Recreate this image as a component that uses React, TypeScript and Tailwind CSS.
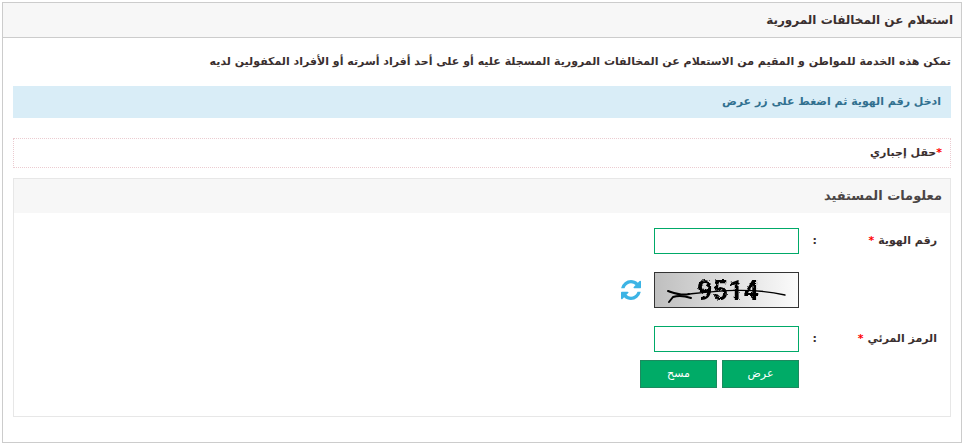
import type { ReactNode } from "react";

const fontStack = "font-['DejaVu_Sans','Noto_Sans',sans-serif]";

const inputClasses =
  "block h-[26px] w-[145px] border border-[#00a968] bg-white px-2 text-xs text-[#333] outline-none";

const buttonClasses =
  "h-7 min-w-[77px] border border-[#1d8a5f] bg-[#00ab67] text-[11px] text-white cursor-pointer hover:bg-[#009459]";

interface FieldRowProps {
  label?: string;
  htmlFor?: string;
  children: ReactNode;
}

function FieldRow({ label, htmlFor, children }: FieldRowProps) {
  return (
    <div className="grid grid-cols-[120px_18px_1fr] items-center text-[11px] font-bold text-[#3a2f2f]">
      {label ? (
        <label htmlFor={htmlFor}>
          {label} <span className="text-[#f00]">*</span>
        </label>
      ) : (
        <span />
      )}
      <span>{label ? ":" : ""}</span>
      <div className="flex items-center gap-[13px]">{children}</div>
    </div>
  );
}

function Captcha() {
  return (
    <svg
      viewBox="0 0 143 34"
      className="h-9 w-[145px] border border-[#333]"
      role="img"
      aria-label="captcha"
    >
      <defs>
        <linearGradient id="captchaBg">
          <stop offset="0" stopColor="#bfbfbf" />
          <stop offset="1" stopColor="#fbfbfb" />
        </linearGradient>
        <filter id="captchaRough" x="-10%" y="-10%" width="120%" height="120%">
          <feTurbulence type="fractalNoise" baseFrequency="0.5" numOctaves="2" seed="4" />
          <feDisplacementMap in="SourceGraphic" scale="3" xChannelSelector="R" yChannelSelector="G" />
          <feGaussianBlur stdDeviation="0.3" />
        </filter>
      </defs>
      <rect width="143" height="34" fill="url(#captchaBg)" />
      <text
        x="42"
        y="27"
        fontFamily="Roboto"
        fontWeight="700"
        fontSize="27"
        direction="ltr"
        filter="url(#captchaRough)"
      >
        9514
      </text>
      <g fill="none" stroke="#000" strokeLinecap="round">
        <path d="M13 18 C19 20 26 23 34 21" strokeWidth="2" />
        <path d="M14 29 L18 24 C24 22 30 23 36 25" strokeWidth="2" />
        <path d="M34 21 C62 18 96 14 130 22" strokeWidth="1.3" />
      </g>
    </svg>
  );
}

function RefreshIcon() {
  return (
    <svg viewBox="0 0 1536 1536" className="size-5" fill="currentColor" aria-hidden="true">
      <path d="M1511 928q0 5-1 7-64 268-268 434.500t-478 166.500q-146 0-282.500-55t-243.500-157l-129 129q-19 19-45 19t-45-19-19-45v-448q0-26 19-45t45-19h448q26 0 45 19t19 45-19 45l-137 137q71 66 161 102t187 36q134 0 250-65t186-179q11-17 53-117 8-23 30-23h192q13 0 22.500 9.500t9.500 22.500zm25-800v448q0 26-19 45t-45 19h-448q-26 0-45-19t-19-45 19-45l138-138q-148-137-349-137-134 0-250 65t-186 179q-11 17-53 117-8 23-30 23h-199q-13 0-22.500-9.500t-9.500-22.500v-7q65-268 270-434.500t480-166.500q146 0 284 55.500t245 156.500l130-129q19-19 45-19t45 19 19 45z" />
    </svg>
  );
}

export default function App() {
  return (
    <div dir="rtl" className={`bg-white pt-[2px] pl-[2px] ${fontStack}`}>
      <main className="border border-[#ccc]">
        <h1 className="border-b border-[#ccc] bg-[#f7f7f7] px-2 text-xs leading-[34px] font-bold text-[#3a2f2f]">
          استعلام عن المخالفات المرورية
        </h1>

        <div className="px-[10px] pb-[25px]">
          <p className="py-[14px] text-[11px] leading-5 font-bold text-[#3a2f2f]">
            تمكن هذه الخدمة للمواطن و المقيم من الاستعلام عن المخالفات المرورية المسجلة عليه أو على أحد أفراد أسرته أو الأفراد المكفولين لديه
          </p>

          <p className="bg-[#d9edf7] px-[10px] text-[11px] leading-8 font-bold text-[#31708f]">
            ادخل رقم الهوية ثم اضغط على زر عرض
          </p>

          <p className="mt-5 border border-dotted border-[#ebccd1] px-2 text-[11px] leading-7 font-bold text-[#3a2f2f]">
            <span className="text-[#f00]">*</span>حقل إجباري
          </p>

          <form className="mt-[10px] border border-[#e7e7e7]" onSubmit={(e) => e.preventDefault()}>
            <h2 className="bg-[#f7f7f7] px-2 text-[13px] leading-[34px] font-bold text-[#4b4646]">
              معلومات المستفيد
            </h2>

            <div className="flex flex-col gap-[18px] px-[13px] pt-[15px] pb-7">
              <FieldRow label="رقم الهوية" htmlFor="idNumber">
                <input id="idNumber" type="text" className={inputClasses} />
              </FieldRow>

              <FieldRow>
                <Captcha />
                <button type="button" aria-label="تحديث" className="cursor-pointer text-[#3cb4e5]">
                  <RefreshIcon />
                </button>
              </FieldRow>

              <div className="flex flex-col gap-2">
                <FieldRow label="الرمز المرئي" htmlFor="visualCode">
                  <input id="visualCode" type="text" className={inputClasses} />
                </FieldRow>

                <div className="flex gap-[5px] ps-[138px]">
                  <button type="submit" className={buttonClasses}>
                    عرض
                  </button>
                  <button type="reset" className={buttonClasses}>
                    مسح
                  </button>
                </div>
              </div>
            </div>
          </form>
        </div>
      </main>
    </div>
  );
}
